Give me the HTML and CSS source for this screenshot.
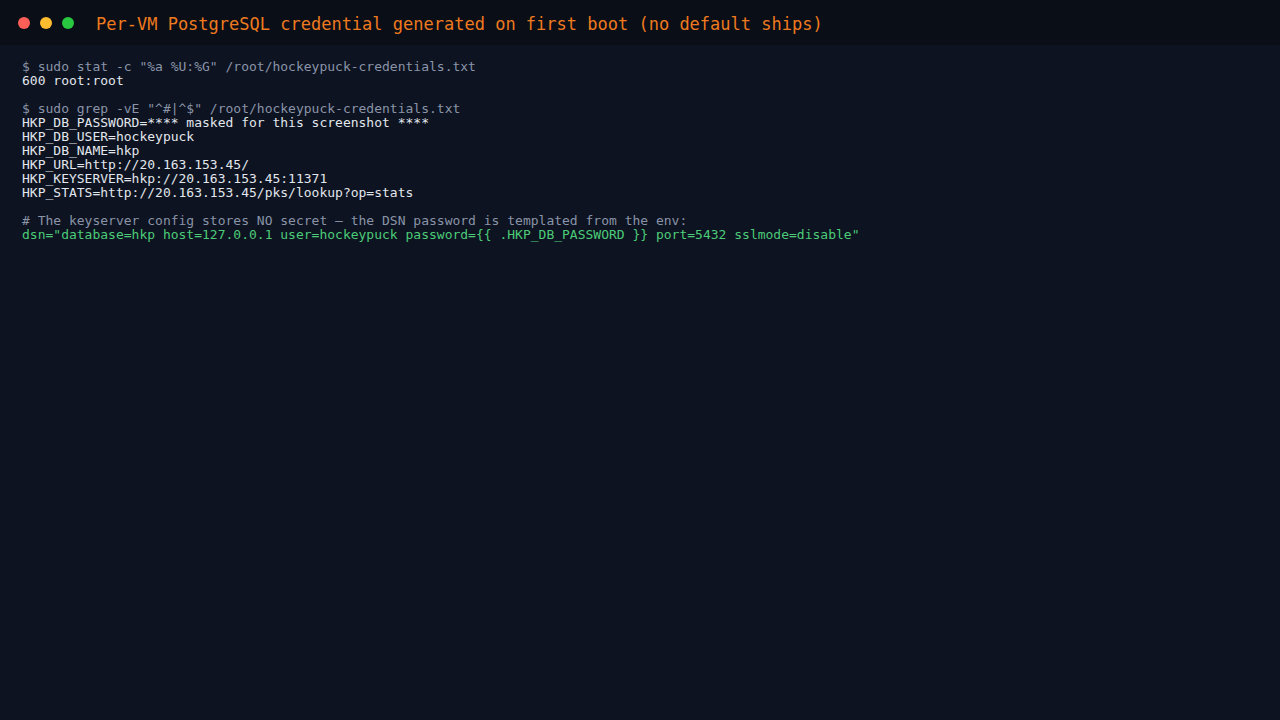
FILE: index.html
```html
<!DOCTYPE html>
<html>
<head>
<meta charset="utf-8">
<link rel="stylesheet" href="styles.css">
</head>
<body>
<header class="bar">
  <div class="dots">
    <span class="dot red"></span>
    <span class="dot yellow"></span>
    <span class="dot green"></span>
  </div>
  <h1 class="title">Per-VM PostgreSQL credential generated on first boot (no default ships)</h1>
</header>
<main class="term">
  <div class="block">
    <div class="line cmd">$ sudo stat -c "%a %U:%G" /root/hockeypuck-credentials.txt</div>
    <div class="line out">600 root:root</div>
  </div>
  <div class="block">
    <div class="line cmd">$ sudo grep -vE "^#|^$" /root/hockeypuck-credentials.txt</div>
    <div class="line out">HKP_DB_PASSWORD=**** masked for this screenshot ****</div>
    <div class="line out">HKP_DB_USER=hockeypuck</div>
    <div class="line out">HKP_DB_NAME=hkp</div>
    <div class="line out">HKP_URL=http://20.163.153.45/</div>
    <div class="line out">HKP_KEYSERVER=hkp://20.163.153.45:11371</div>
    <div class="line out">HKP_STATS=http://20.163.153.45/pks/lookup?op=stats</div>
  </div>
  <div class="block">
    <div class="line cmd"># The keyserver config stores NO secret — the DSN password is templated from the env:</div>
    <div class="line ok">dsn="database=hkp host=127.0.0.1 user=hockeypuck password={{ .HKP_DB_PASSWORD }} port=5432 sslmode=disable"</div>
  </div>
</main>
</body>
</html>
```
FILE: styles.css
```css
html, body {
  margin: 0;
  padding: 0;
  background: #0d1320;
  height: 100%;
}
body {
  font-family: "DejaVu Sans Mono", "Liberation Mono", monospace;
}
.bar {
  display: flex;
  align-items: center;
  gap: 22px;
  height: 45px;
  padding: 0 18px;
  background: #0a0e17;
  box-sizing: border-box;
}
.dots {
  display: flex;
  gap: 10px;
}
.dot {
  width: 12px;
  height: 12px;
  border-radius: 50%;
}
.red { background: #ff5f57; }
.yellow { background: #febc2e; }
.green { background: #28c840; }
.title {
  margin: 0;
  padding-top: 3px;
  font-size: 17px;
  font-weight: normal;
  color: #ee7a1f;
  line-height: 1;
}
.term {
  padding: 15px 22px;
  font-size: 13px;
  line-height: 14px;
}
.line {
  white-space: pre;
}
.block {
  margin-bottom: 14px;
}
.cmd { color: #8a94a8; }
.out { color: #e2e6ed; }
.ok { color: #4ccb79; }
```
